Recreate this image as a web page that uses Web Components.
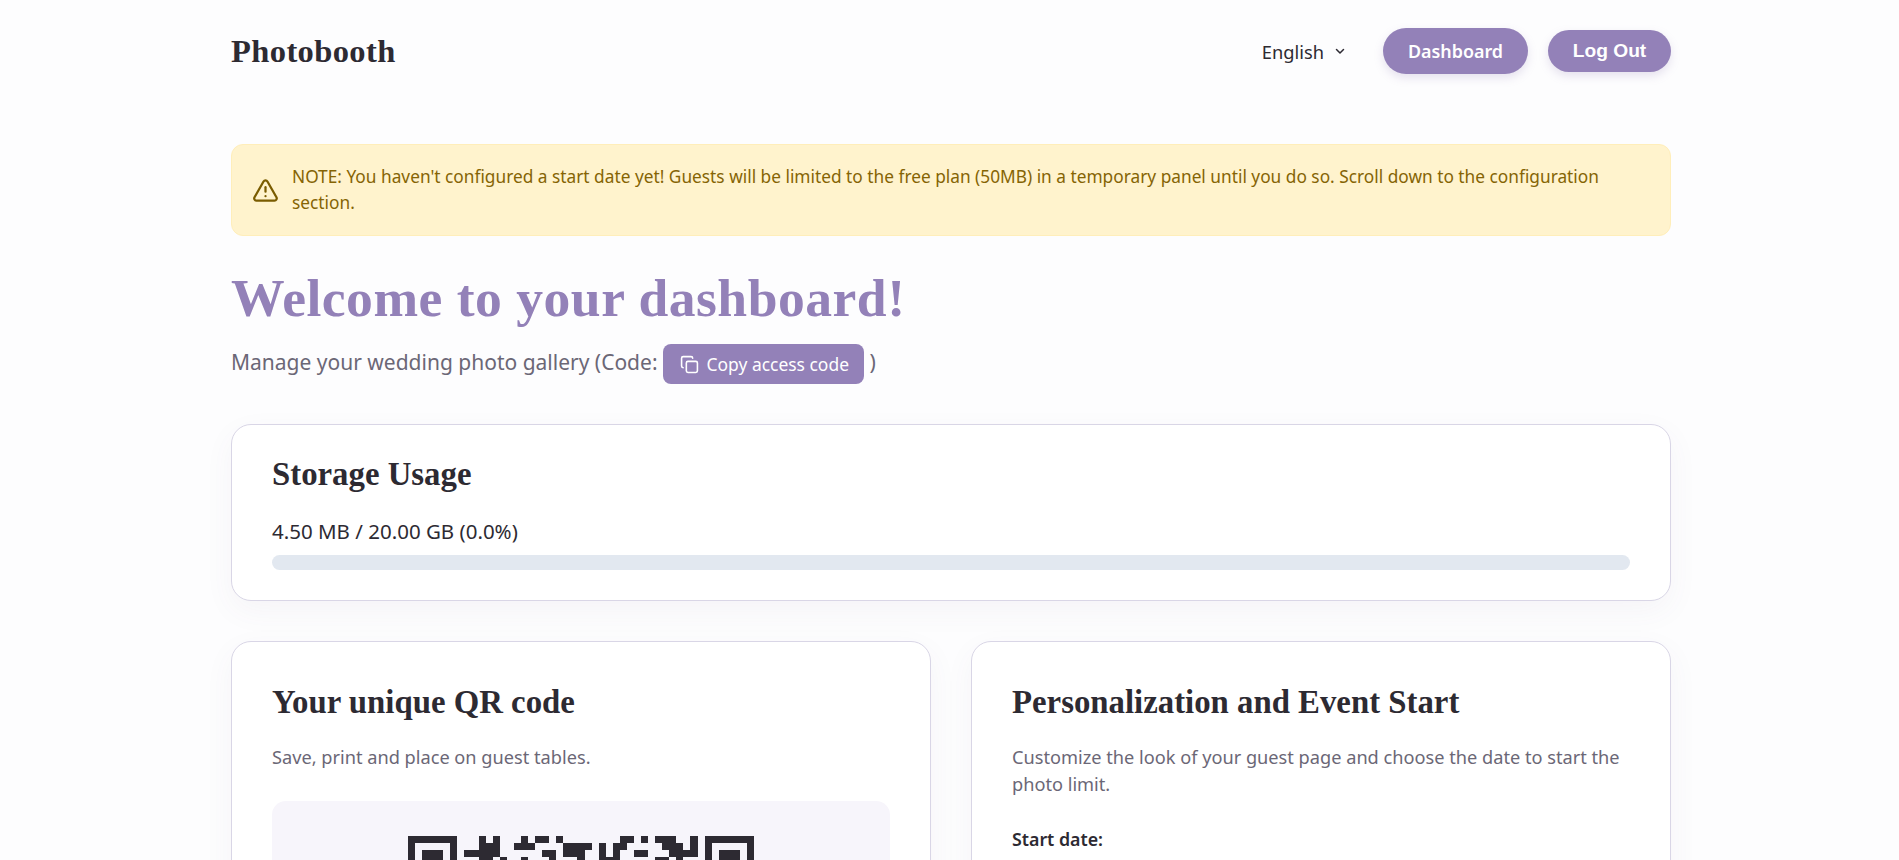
<!DOCTYPE html>
<html lang="en">
<head>
<meta charset="utf-8">
<title>Photobooth</title>
<style>
  html, body { margin: 0; background: #fdfdfe; }
  body { font-family: "Noto Sans", sans-serif; color: #2d2a32; overflow: hidden; }
</style>
</head>
<body>
<photo-app></photo-app>

<script>
class SiteHeader extends HTMLElement {
  connectedCallback() {
    this.attachShadow({ mode: 'open' });
    this.shadowRoot.innerHTML = `
      <style>
        :host { display: flex; justify-content: space-between; align-items: center; padding-top: 28px; margin-bottom: 70px; height: 46px; }
        .logo { font: 700 32.5px "Liberation Serif", serif; color: #2d2a32; letter-spacing: .4px; text-decoration: none; }
        nav { display: flex; align-items: center; }
        .lang { display: flex; align-items: center; gap: 10px; font-size: 18.3px; color: #2d2a32; margin-right: 37px; }
        .btn { display: flex; align-items: center; justify-content: center; color: #fff; background: #9381b8; border-radius: 24px; box-shadow: 0 4px 10px rgba(147,129,184,.22); text-decoration: none; }
        .dash { width: 145px; height: 46px; font: 600 17.9px "Noto Sans", sans-serif; margin-right: 20px; }
        .out { width: 123px; height: 42px; font: 700 19.2px "Liberation Sans", sans-serif; }
      </style>
      <a class="logo" href="#">Photobooth</a>
      <nav>
        <div class="lang">English
          <svg width="12" height="12" viewBox="0 0 24 24" fill="none" stroke="#2d2a32" stroke-width="3" stroke-linecap="round" stroke-linejoin="round"><path d="m5 9 7 7 7-7"/></svg>
        </div>
        <a class="btn dash" href="#">Dashboard</a>
        <a class="btn out" href="#">Log Out</a>
      </nav>`;
  }
}

class NoteBanner extends HTMLElement {
  connectedCallback() {
    this.attachShadow({ mode: 'open' });
    this.shadowRoot.innerHTML = `
      <style>
        :host { display: flex; align-items: center; gap: 13px; box-sizing: border-box; height: 92px; padding: 0 40px 0 20px; background: #fff3cd; border: 1px solid #ffeeba; border-radius: 12px; color: #856404; font-size: 17.3px; line-height: 25.6px; }
        svg { flex: none; }
      </style>
      <svg width="27" height="27" viewBox="0 0 24 24" fill="none" stroke="#7a5c00" stroke-width="2" stroke-linecap="round" stroke-linejoin="round"><path d="m21.73 18-8-14a2 2 0 0 0-3.48 0l-8 14A2 2 0 0 0 4 21h16a2 2 0 0 0 1.73-3"/><path d="M12 9v4"/><path d="M12 17h.01"/></svg>
      <div><slot></slot></div>`;
  }
}

class DashCard extends HTMLElement {
  connectedCallback() {
    this.attachShadow({ mode: 'open' });
    this.shadowRoot.innerHTML = `
      <style>
        :host { display: block; box-sizing: border-box; padding: var(--pad, 43px 40px 40px); background: #fff; border: 1px solid #d9d6e6; border-radius: 20px; box-shadow: 0 10px 30px rgba(90,80,120,.05); }
        h2 { margin: 0; font: 700 32.8px/34px "Liberation Serif", serif; color: #2d2a32; }
      </style>
      <h2>${this.getAttribute('heading')}</h2>
      <slot></slot>`;
  }
}

class UsageBar extends HTMLElement {
  connectedCallback() {
    this.attachShadow({ mode: 'open' });
    this.shadowRoot.innerHTML = `
      <style>
        :host { display: block; margin-top: 27px; }
        .label { font-size: 20.5px; line-height: 27px; color: #2d2a32; margin-bottom: 9.5px; }
        .track { height: 15px; background: #e2e8f0; border-radius: 8px; }
      </style>
      <div class="label"><slot></slot></div>
      <div class="track"></div>`;
  }
}

class QrPanel extends HTMLElement {
  connectedCallback() {
    this.attachShadow({ mode: 'open' });
    // only the rows that show above the fold carry real data
    const rows = [
      [[10,1],[12,1],[16,1],[18,2],[21,1],[30,2],[33,1],[35,3],[40,1]],
      [[10,3],[15,3],[22,2],[24,2],[27,1],[29,2],[36,3],[40,1]],
      [[8,5],[19,2],[22,3],[27,1],[29,1],[32,2],[37,4]],
      [[10,2],[13,1],[16,1],[20,1],[24,1],[27,3],[35,2],[38,1]]
    ];
    let rects = '';
    rows.forEach((r, y) => r.forEach(([x, w]) => { rects += `<rect x="${x}" y="${y}" width="${w}" height="1"/>`; }));
    const finder = (x, y) => `<path fill-rule="evenodd" d="M${x} ${y}h7v7h-7zM${x + 1} ${y + 1}v5h5v-5z"/><rect x="${x + 2}" y="${y + 2}" width="3" height="3"/>`;
    this.shadowRoot.innerHTML = `
      <style>
        :host { display: flex; justify-content: center; margin-top: 30px; padding: 35px 0; background: #f7f5fb; border-radius: 14px; }
        svg { display: block; }
      </style>
      <svg width="346" height="346" viewBox="0 0 49 49" fill="#2d2a32" shape-rendering="crispEdges">
        ${finder(0, 0)}${finder(42, 0)}${finder(0, 42)}${rects}
      </svg>`;
  }
}

class PhotoApp extends HTMLElement {
  connectedCallback() {
    this.attachShadow({ mode: 'open' });
    this.shadowRoot.innerHTML = `
      <style>
        :host { display: block; width: 1440px; margin-left: 231px; }
        h1 { margin: 31px 0 15px; font: 700 53.6px/62px "Liberation Serif", serif; color: #9381b8; letter-spacing: .5px; }
        .sub { margin: 0; font-size: 21px; line-height: 36px; height: 40px; color: #6b6776; display: flex; }
        .copy { display: inline-flex; align-items: center; gap: 8px; box-sizing: border-box; width: 201px; height: 40px; margin: 0 6px 0 5px; padding-left: 17px; background: #9381b8; color: #fff; font-size: 17.45px; line-height: 40px; border-radius: 8px; }
        dash-card.storage { --pad: 32px 40px 29px; height: 177px; margin: 40px 0 40px; }
        .cols { display: grid; grid-template-columns: 1fr 1fr; gap: 40px; }
        p.hint { margin: 25px 0 0; font-size: 18.2px; line-height: 27px; color: #6b6776; }
        .date { margin-top: 28px; font-size: 17.8px; font-weight: 600; line-height: 27px; color: #2d2a32; }
      </style>
      <site-header></site-header>
      <note-banner>NOTE: You haven't configured a start date yet! Guests will be limited to the free plan (50MB) in a temporary panel until you do so. Scroll down to the configuration section.</note-banner>
      <h1>Welcome to your dashboard!</h1>
      <p class="sub">Manage your wedding photo gallery (Code:<span class="copy">
        <svg width="19" height="19" viewBox="0 0 24 24" fill="none" stroke="#fff" stroke-width="2" stroke-linecap="round" stroke-linejoin="round"><rect x="8" y="8" width="14" height="14" rx="2"/><path d="M4 16c-1.1 0-2-.9-2-2V4c0-1.1.9-2 2-2h10c1.1 0 2 .9 2 2"/></svg>
        Copy access code</span><span>)</span></p>
      <dash-card class="storage" heading="Storage Usage">
        <usage-bar>4.50 MB / 20.00 GB (0.0%)</usage-bar>
      </dash-card>
      <div class="cols">
        <dash-card heading="Your unique QR code">
          <p class="hint">Save, print and place on guest tables.</p>
          <qr-panel></qr-panel>
        </dash-card>
        <dash-card heading="Personalization and Event Start">
          <p class="hint">Customize the look of your guest page and choose the date to start the photo limit.</p>
          <div class="date">Start date:</div>
        </dash-card>
      </div>`;
  }
}

customElements.define('site-header', SiteHeader);
customElements.define('note-banner', NoteBanner);
customElements.define('dash-card', DashCard);
customElements.define('usage-bar', UsageBar);
customElements.define('qr-panel', QrPanel);
customElements.define('photo-app', PhotoApp);
</script>
</body>
</html>
